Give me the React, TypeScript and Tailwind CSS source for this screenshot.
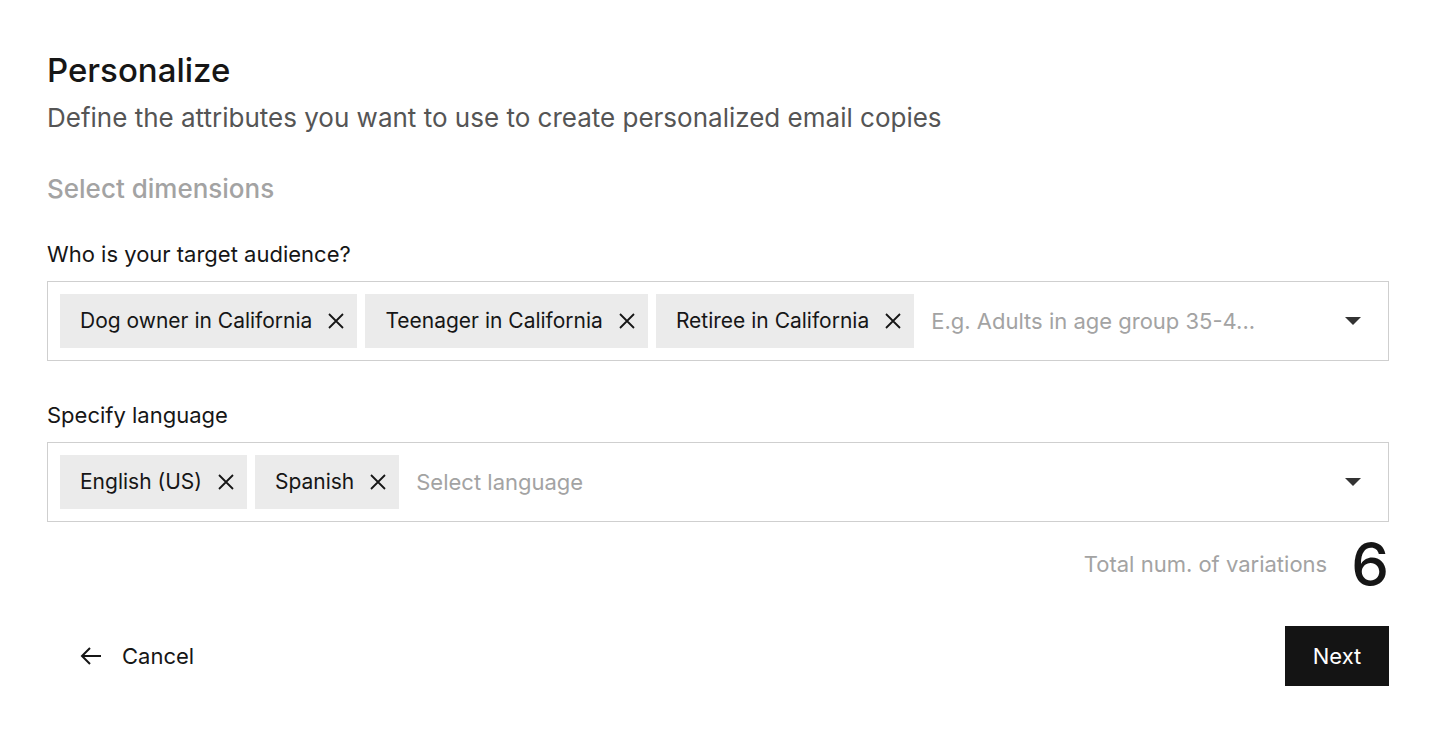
import { FC } from "react";

const Chip: FC<{ label: string }> = ({ label }) => (
  <div className="flex items-center h-[54px] bg-[#ebebeb] pl-5 pr-3 gap-[15px] shrink-0">
    <span className="text-[21px] text-[#161616]">{label}</span>
    <svg width="18" height="18" viewBox="0 0 18 18" fill="none" stroke="#161616" strokeWidth="1.8">
      <path d="M2 2 L16 16 M16 2 L2 16" />
    </svg>
  </div>
);

const Caret: FC = () => (
  <svg width="18" height="10" viewBox="0 0 18 10" className="shrink-0">
    <path d="M1 1 L17 1 L9 9 Z" fill="#333" />
  </svg>
);

const MultiSelect: FC<{ chips: string[]; placeholder: string }> = ({ chips, placeholder }) => (
  <div className="flex items-center h-[80px] border border-[#cfcfcf] pl-3 pr-[26px]">
    <div className="flex items-center gap-2 flex-1 min-w-0">
      {chips.map((c) => (
        <Chip key={c} label={c} />
      ))}
      <span className="ml-[9px] text-[22px] text-[#a3a3a3] truncate">{placeholder}</span>
    </div>
    <Caret />
  </div>
);

const App: FC = () => {
  return (
    <div
      className="min-h-screen bg-white pl-[47px] pr-[43px] pt-[50px]"
      style={{ fontFamily: "Inter, 'Noto Sans', sans-serif" }}
    >
      <h1 className="text-[33px] font-medium text-[#161616] leading-[40px]">Personalize</h1>
      <p className="text-[26px] text-[#555] leading-[34px] mt-[11px]">
        Define the attributes you want to use to create personalized email copies
      </p>
      <h2 className="text-[26px] font-medium text-[#a3a3a3] leading-[34px] mt-[37px]">Select dimensions</h2>

      <label className="block text-[22px] text-[#161616] leading-[30px] mt-[33px]">
        Who is your target audience?
      </label>
      <div className="mt-[12px]">
        <MultiSelect
          chips={["Dog owner in California", "Teenager in California", "Retiree in California"]}
          placeholder="E.g. Adults in age group 35-4..."
        />
      </div>

      <label className="block text-[22px] text-[#161616] leading-[30px] mt-[39px]">Specify language</label>
      <div className="mt-[12px]">
        <MultiSelect chips={["English (US)", "Spanish"]} placeholder="Select language" />
      </div>

      <div className="flex items-center justify-end gap-6 mt-[14px]">
        <span className="text-[22px] text-[#a3a3a3]">Total num. of variations</span>
        <span className="text-[60px] font-medium text-[#161616] leading-[56px]">6</span>
      </div>

      <div className="flex items-center justify-between mt-[34px]">
        <button className="flex items-center gap-5 pl-[33px] h-[60px] text-[22px] text-[#161616]">
          <svg width="22" height="20" viewBox="0 0 22 20" fill="none" stroke="#161616" strokeWidth="2">
            <path d="M21 10 H2 M10 2 L2 10 L10 18" />
          </svg>
          Cancel
        </button>
        <button className="h-[60px] w-[104px] bg-[#141414] text-white text-[22px]">Next</button>
      </div>
    </div>
  );
};

export default App;
